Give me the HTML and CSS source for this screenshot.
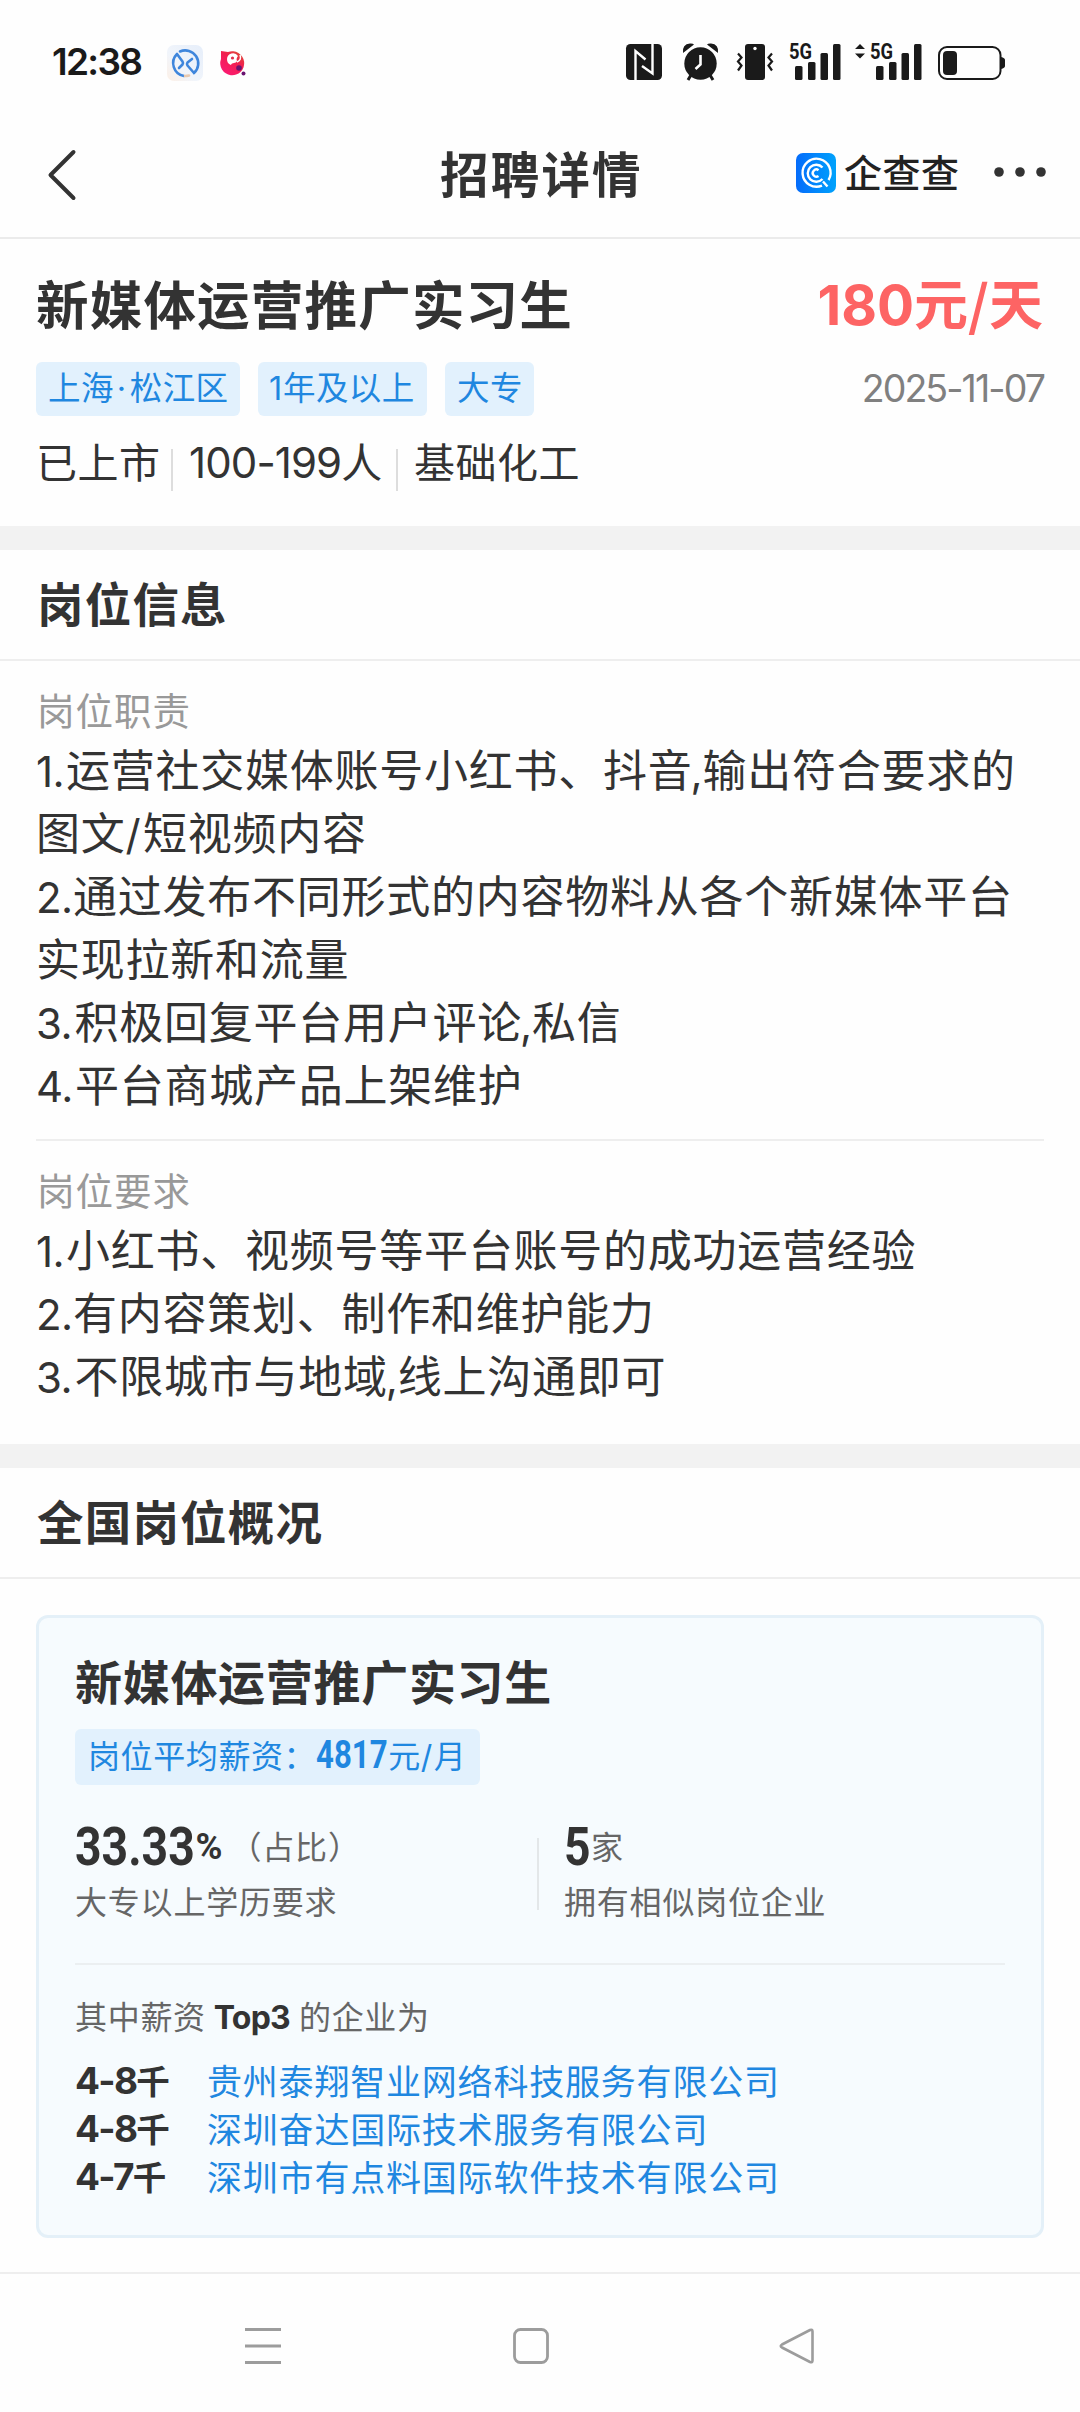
FILE: index.html
```html
<!DOCTYPE html>
<html lang="zh-CN">
<head>
<meta charset="utf-8">
<title>招聘详情</title>
<link rel="stylesheet" href="styles.css">
</head>
<body>
<div class="status">
  <span class="clock">12:38</span>
  <svg class="app-a" width="36" height="36" viewBox="0 0 36 36">
    <defs><linearGradient id="ga" x1="1" y1="0" x2="0" y2="1"><stop offset="0" stop-color="#e6eefa"/><stop offset=".6" stop-color="#f1f5fb"/><stop offset="1" stop-color="#fdf0e6"/></linearGradient></defs>
    <rect width="36" height="36" rx="7" fill="url(#ga)"/>
    <g fill="none" stroke="#3f86dc" stroke-width="2.600" stroke-linecap="round" stroke-linejoin="round">
      <path d="M13 6.500A13 13 0 0 1 27 28L20.500 20.500Q19.500 19 20.500 17.500L25 14"/><path d="M17 31A13 13 0 0 1 10 9L15.500 16.500Q16.500 18 15.500 19.500L12 23"/>
      <path d="M18 31Q20 31 22 30.500" stroke="#e8c9b0"/>
    </g>
  </svg>
  <svg class="app-b" width="26" height="26" viewBox="0 0 26 26">
    <defs><linearGradient id="gb" x1="1" y1="0" x2=".3" y2="1"><stop offset="0" stop-color="#d8592f"/><stop offset=".45" stop-color="#f1204f"/><stop offset="1" stop-color="#fb1a72"/></linearGradient></defs>
    <path d="M1 1L8 2A12 12 0 1 1 1 9Z" fill="url(#gb)"/>
    <path d="M7 9a6 6 0 0 1 11-3c-1 1-2 3-1 5-1 3-5 1-6 4-3-1-4-3-4-6z" fill="#fff"/>
    <circle cx="12.500" cy="8" r="1.600" fill="#e0304d"/>
    <path d="M20 5q2 5-3 7" stroke="#fff" stroke-width="1.500" fill="none"/>
    <circle cx="19" cy="18" r="2.800" fill="#6a1470"/><circle cx="23.500" cy="23.500" r="2" fill="#6a1470"/>
  </svg>
  <div class="sys">
    <svg width="36" height="36" viewBox="0 0 36 36"><rect width="36" height="36" rx="4.500" fill="#1a1a1a"/><path d="M9.500 36V7L19.500 15.500M26.500 0V29.500L16 22" fill="none" stroke="#fff" stroke-width="2.400"/></svg>
    <svg class="alarm" width="37" height="38" viewBox="0 0 37 38" fill="#1a1a1a"><circle cx="18.500" cy="20.500" r="16.200"/><path d="M1 10Q0 1 8 .5Q11 .3 12 1.500zM36 10Q37 1 29 .5Q26 .3 25 1.500z"/><path d="M9 32l-3 5M28 32l3 5" stroke="#1a1a1a" stroke-width="3"/><path d="M18.500 12v9.500L13.500 26" fill="none" stroke="#fff" stroke-width="2.600"/></svg>
    <svg class="vibrate" width="36" height="36" viewBox="0 0 36 36"><rect x="8" width="20" height="36" rx="3" fill="#1a1a1a"/><circle cx="18" cy="4.500" r="1.700" fill="#fff"/><path d="M1 9.500l3.500 4-3.500 4 3.500 4-3.500 5M35 9.500l-3.500 4 3.500 4-3.500 4 3.500 5" fill="none" stroke="#1a1a1a" stroke-width="2.200"/></svg>
    <svg class="sig" width="52" height="37" viewBox="0 0 52 37" fill="#1a1a1a"><text x="0" y="15.500" class="net" textLength="23" lengthAdjust="spacingAndGlyphs">5G</text><rect x="6" y="23" width="7.500" height="14" rx="1.500"/><rect x="19" y="19" width="7.500" height="18" rx="1.500"/><rect x="31.500" y="10" width="7.500" height="27" rx="1.500"/><rect x="44" y="1" width="7.500" height="36" rx="1.500"/></svg>
    <svg class="sig2" width="67" height="37" viewBox="-15 0 67 37" fill="#1a1a1a"><path d="M-15 6l5-5 5 5zM-15 10.500l5 5 5-5z"/><text x="0" y="15.500" class="net" textLength="23" lengthAdjust="spacingAndGlyphs">5G</text><rect x="6" y="23" width="7.500" height="14" rx="1.500"/><rect x="19" y="19" width="7.500" height="18" rx="1.500"/><rect x="31.500" y="10" width="7.500" height="27" rx="1.500"/><rect x="44" y="1" width="7.500" height="36" rx="1.500"/></svg>
    <svg class="battery" width="67" height="34" viewBox="0 0 67 34"><rect x="1" y="1" width="61.500" height="32" rx="8" fill="none" stroke="#1a1a1a" stroke-width="2"/><rect x="5" y="5" width="14" height="24" rx="4" fill="#1a1a1a"/><path d="M63 11q4 1 4 3v6q0 2-4 3z" fill="#1a1a1a"/></svg>
  </div>
</div>

<header class="nav">
  <svg class="back" width="28" height="50" viewBox="0 0 28 50"><path d="M25.500 2L2.500 25L25.500 48" fill="none" stroke="#333" stroke-width="4" stroke-linecap="round" stroke-linejoin="round"/></svg>
  <h1>招聘详情</h1>
  <div class="brand">
    <svg width="40" height="40" viewBox="0 0 40 40">
      <defs><linearGradient id="gq" x1="0" y1="0" x2="1" y2="0"><stop offset="0" stop-color="#056cfb"/><stop offset="1" stop-color="#00a2fc"/></linearGradient></defs>
      <rect width="40" height="40" rx="7" fill="url(#gq)"/>
      <g fill="none" stroke="#fff" stroke-width="2.400"><path d="M32.500 27A14 14 0 1 0 26 32.600M27 28.500L31.500 33.500"/><path d="M26.500 14.500A8.500 8.500 0 1 0 26.500 26"/><path d="M22.500 17.200A3.600 3.600 0 1 0 22.500 23"/></g>
    </svg>
    <span>企查查</span>
  </div>
  <svg class="more" width="54" height="12" viewBox="0 0 54 12" fill="#333"><circle cx="6" cy="6" r="4.800"/><circle cx="27" cy="6" r="4.800"/><circle cx="48" cy="6" r="4.800"/></svg>
</header>

<section class="job">
  <div class="job-head"><h2>新媒体运营推广实习生</h2><strong class="pay"><i>180</i>元/天</strong></div>
  <div class="job-tags">
    <span class="tag t1">上海<i>·</i>松江区</span><span class="tag t2"><i>1</i>年及以上</span><span class="tag t3">大专</span>
    <time>2025-11-07</time>
  </div>
  <div class="company"><span>已上市</span><span><i>100-199</i>人</span><span>基础化工</span></div>
</section>

<section class="block">
  <h3>岗位信息</h3>
  <div class="part">
    <h4>岗位职责</h4>
    <p><i class="one">1.</i>运营社交媒体账号小红书、抖音<i class="comma">,</i>输出符合要求的<br>图文<i class="slash">/</i>短视频内容</p>
    <p><i>2.</i>通过发布不同形式的内容物料从各个新媒体平台<br>实现拉新和流量</p>
    <p><i class="three">3.</i>积极回复平台用户评论<i class="comma">,</i>私信</p>
    <p><i class="four">4.</i>平台商城产品上架维护</p>
  </div>
  <div class="part">
    <h4>岗位要求</h4>
    <p><i class="one">1.</i>小红书、视频号等平台账号的成功运营经验</p>
    <p><i>2.</i>有内容策划、制作和维护能力</p>
    <p><i class="three">3.</i>不限城市与地域<i class="comma">,</i>线上沟通即可</p>
  </div>
</section>

<section class="block last">
  <h3>全国岗位概况</h3>
  <article class="card">
    <h5>新媒体运营推广实习生</h5>
    <div class="avg">岗位平均薪资：<b><span>4817</span></b>元<i>/</i>月</div>
    <div class="stats">
      <div class="stat"><div class="fig"><b class="pct"><span>33.33</span></b><em>%</em><span class="unit">（占比）</span></div><div class="cap">大专以上学历要求</div></div>
      <div class="stat second"><div class="fig"><b class="num"><span>5</span></b><span class="unit">家</span></div><div class="cap">拥有相似岗位企业</div></div>
    </div>
    <div class="top">其中薪资<b>Top3</b>的企业为</div>
    <ul>
      <li><b><i>4-8</i>千</b><a>贵州泰翔智业网络科技服务有限公司</a></li>
      <li><b><i>4-8</i>千</b><a>深圳奋达国际技术服务有限公司</a></li>
      <li><b><i>4-7</i>千</b><a>深圳市有点料国际软件技术有限公司</a></li>
    </ul>
  </article>
</section>

<footer class="keys">
  <svg width="36" height="36" viewBox="0 0 36 36"><path d="M0 1.500h36M0 18h36M0 34.500h36" stroke="#9c9c9c" stroke-width="3"/></svg>
  <svg width="36" height="36" viewBox="0 0 36 36"><rect x="1.500" y="1.500" width="33" height="33" rx="6" fill="none" stroke="#9c9c9c" stroke-width="2.800"/></svg>
  <svg width="36" height="36" viewBox="0 0 36 36"><path d="M33.500 3.500v29q0 2.500-2.500 1.500L3 19.500q-2.500-1.500 0-3L31 2q2.500-1 2.500 1.500z" fill="none" stroke="#9c9c9c" stroke-width="2.600"/></svg>
</footer>
</body>
</html>
```
FILE: styles.css
```css
* { box-sizing: border-box; margin: 0; padding: 0; }
body {
  width: 1080px; height: 2412px; overflow: hidden;
  background: #fefefe; color: #333;
  font-family: "Noto Sans CJK SC", sans-serif;
}
svg { display: block; flex: none; overflow: visible; }
i, em { font-style: normal; }
i { font-family: "Inter", sans-serif; line-height: 1; }
ul { list-style: none; }

.status { display: flex; align-items: flex-start; height: 124px; padding: 0 75px 0 52px; }
.clock { width: 115px; margin-top: 37px; font: 600 37px/50px "Inter", sans-serif; letter-spacing: -1.700px; color: #1a1a1a; }
.app-a { margin-top: 45px; }
.app-b { margin: 50px 0 0 17px; }
.sys { display: flex; margin: 44px 0 0 auto; }
.alarm { margin: -1px 18px 0 20px; }
.vibrate { margin-right: 16px; }
.sig, .sig2 { margin-top: -1px; }
.sig { margin-right: 14px; }
.sig2 { margin-right: 16px; }
.battery { margin-top: 2px; }
.net { font: 700 22px "Roboto", sans-serif; }

.nav { display: flex; align-items: center; height: 115px; padding: 0 33px 17px 48px; border-bottom: 2px solid #ebebeb; }
.back { margin-top: 5px; }
.nav h1 { width: 200px; margin: -1px 0 0 364px; font-size: 48.500px; line-height: 70px; font-weight: 700; letter-spacing: 2.2px; white-space: nowrap; }
.brand { display: flex; align-items: center; gap: 8px; width: 197px; margin: 2px 0 0 156px; }
.brand span { font-size: 38px; line-height: 44px; font-weight: 500; letter-spacing: .5px; color: #222; white-space: nowrap; margin-top: -4px; }

.job { height: 287px; padding: 28px 36px 0; }
.job-head { display: flex; justify-content: space-between; height: 70px; line-height: 70px; }
.job-head h2 { font-size: 52.500px; font-weight: 700; letter-spacing: 1.200px; }
.pay { padding-right: 1px; font-size: 54px; font-weight: 700; color: #fd6464; }
.pay i { font-size: 55px; letter-spacing: 0; }
.job-tags { display: flex; height: 54px; margin-top: 25px; align-items: center; }
.tag { height: 54px; padding-left: 12px; border-radius: 6px; background: #e2f1fd; color: #1f87e0; font-size: 32.500px; line-height: 48px; letter-spacing: .4px; white-space: nowrap; }
.t1 { width: 204px; } .t2 { width: 169px; margin: 0 18px; } .t3 { width: 89px; }
.t1 i { display: inline-block; width: 16px; text-indent: 3px; letter-spacing: 0; }
.t2 i { display: inline-block; width: 13px; text-indent: -1px; }
time { margin-left: auto; font: 400 37.500px/50px "Inter", sans-serif; letter-spacing: -1.900px; color: #808080; }
.company { display: flex; height: 60px; margin-top: 18px; font-size: 41px; line-height: 53px; letter-spacing: .5px; white-space: nowrap; }
.company span { position: relative; }
.company span + span { padding-left: 16px; }
.company span:nth-child(1) { width: 137px; }
.company span:nth-child(2) { width: 225px; }
.company i { font-size: 42px; letter-spacing: -.9px; }
.company span + span::before { content: ""; position: absolute; left: -2px; top: 15px; width: 2px; height: 42px; background: #ddd; }

.block { border-top: 24px solid #f2f2f2; }
.block h3 { height: 111px; padding: 0 36px 5px 37px; border-bottom: 2px solid #eee; font-size: 46.500px; line-height: 104px; font-weight: 700; letter-spacing: 1.200px; }
.part { margin: 0 36px; padding: 24px 0 25px; }
.part + .part { border-top: 2px solid #eee; padding-bottom: 39px; }
.part h4 { height: 52px; font-size: 37.500px; line-height: 47px; font-weight: 400; letter-spacing: 1px; color: #999; padding-left: 1px; }
.part p { font-size: 44px; line-height: 63px; letter-spacing: .75px; white-space: nowrap; }
.part p:last-child { margin-bottom: -1px; }
.part i { display: inline-block; width: 37px; font-size: 42px; letter-spacing: -.5px; }
.part .one { width: 30px; letter-spacing: -.5px; }
.part .three { width: 38.500px; }
.part .four { width: 39px; }
.part .comma { width: 10px; text-indent: -2px; }
.part .slash { width: 17.500px; text-indent: 0; }

.card { height: 623px; margin: 36px 36px 34px; padding: 0 36px; border: 3px solid #e4f0f8; border-radius: 12px; background: #f6fbfe; }
.card h5 { margin-top: 27px; font-size: 47px; line-height: 70px; font-weight: 700; letter-spacing: .7px; }
.avg { width: 405px; height: 56px; margin-top: 14px; padding-left: 13px; border-radius: 6px; background: #e2f1fd; color: #1f87e0; font-size: 32px; line-height: 51px; letter-spacing: .6px; white-space: nowrap; }
.avg b { display: inline-block; width: 72px; font: 700 39px/40px "Roboto", sans-serif; letter-spacing: 0; }
.avg b span, .fig b span { display: inline-block; transform: scaleX(.8); transform-origin: 0 50%; }
.avg i { display: inline-block; width: 13px; }
.stats { display: flex; height: 180px; padding-top: 30px; border-bottom: 2px solid #ebeff1; }
.stat { position: relative; flex: none; width: 489px; font-size: 32px; letter-spacing: .8px; color: #666; white-space: nowrap; }
.fig { display: flex; align-items: baseline; height: 60px; line-height: 62px; }
.fig b { font: 700 54.500px/62px "Roboto", sans-serif; letter-spacing: 0; color: #333; }
.fig b span { transform: scaleX(.85); }
.pct { width: 120.500px; }
.num { width: 27px; }
.fig em { width: 34px; font: 700 35px/62px "Roboto", sans-serif; letter-spacing: 0; color: #333; position: relative; top: -6px; }
.fig em { font-size: 36.500px; }
.unit { position: relative; top: -6px; }
.cap { height: 50px; line-height: 50px; }
.second { width: 420px; }
.second::before { content: ""; position: absolute; left: -27px; top: 23px; width: 2px; height: 72px; background: #e3e7e9; }
.top { height: 60px; margin-top: 20px; font-size: 32px; line-height: 60px; letter-spacing: .7px; color: #666; }
.top b { display: inline-block; margin: 0 9px 0 8px; font: 700 32px/1 "Inter", sans-serif; letter-spacing: -.8px; color: #333; }
.card ul { margin-top: 11px; }
.card li { display: flex; height: 48px; line-height: 48px; font-size: 35px; letter-spacing: .8px; white-space: nowrap; }
.card li b { width: 132px; font-size: 33.500px; letter-spacing: 0; }
.card li i { font-size: 37px; letter-spacing: -1.700px; }
.card a { color: #1f87e0; }

.keys { display: flex; height: 140px; padding: 54px 265px 0 245px; justify-content: space-between; border-top: 2px solid #eee; }
.keys svg:nth-child(2) { margin-left: 1px; }
```
